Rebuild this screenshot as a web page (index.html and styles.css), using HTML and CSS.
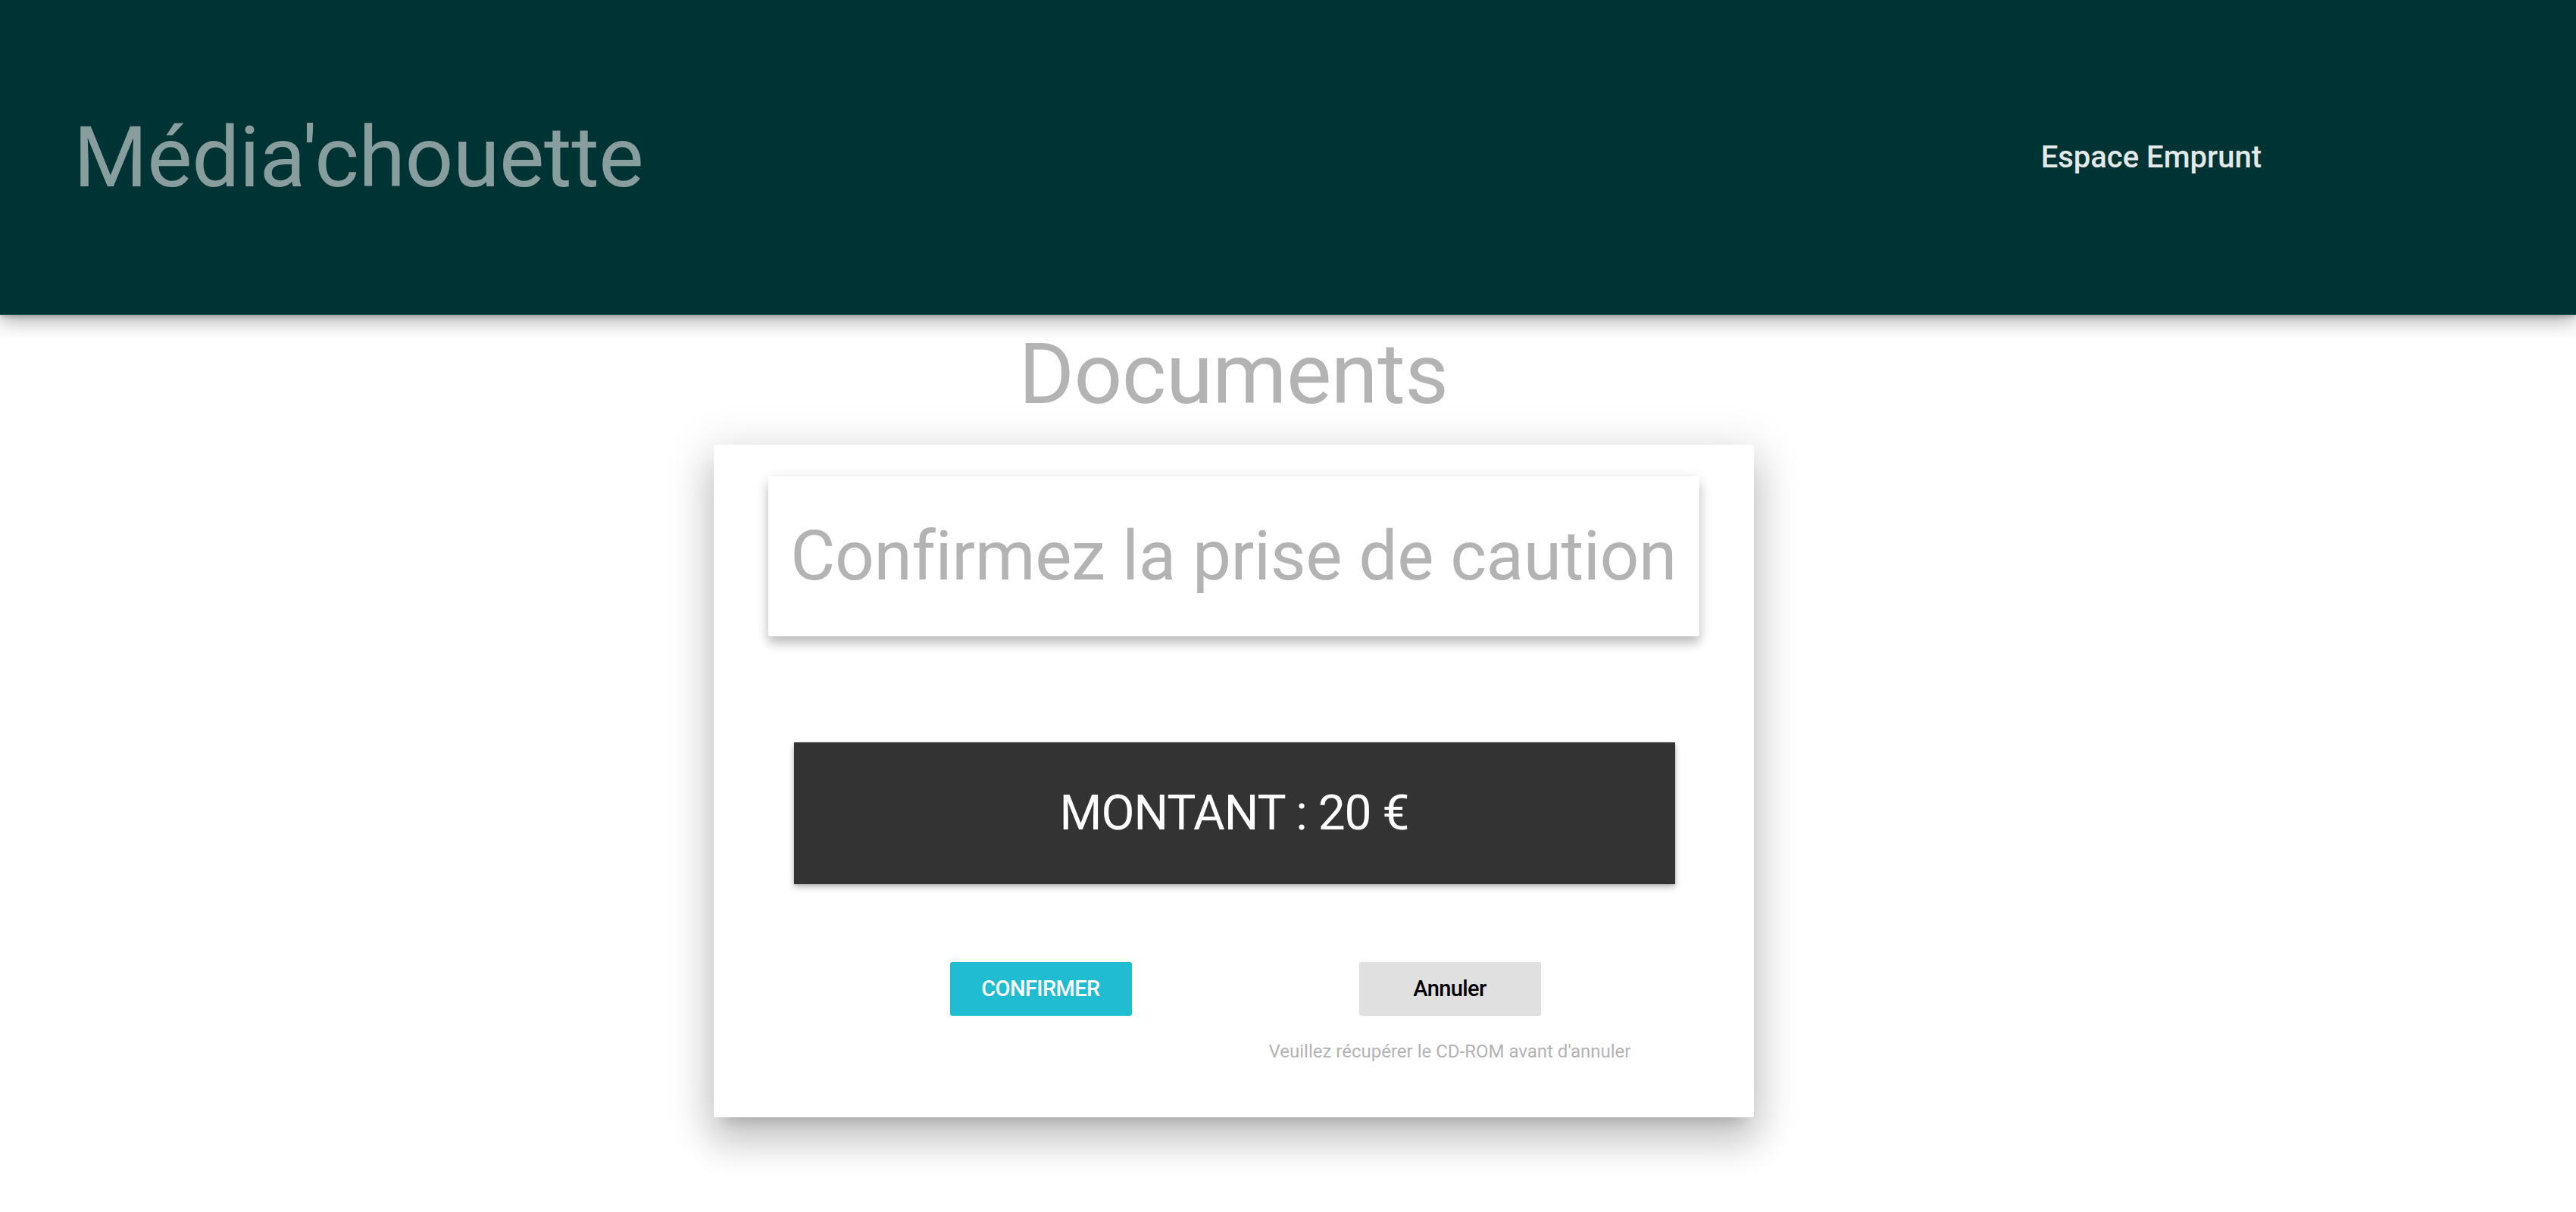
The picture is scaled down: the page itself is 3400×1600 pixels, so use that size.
FILE: index.html
```html
<!DOCTYPE html>
<html lang="fr">
<head>
<meta charset="utf-8">
<title>Média'chouette</title>
<link rel="stylesheet" href="styles.css">
</head>
<body>
<header class="topbar">
  <div class="brand">Média'chouette</div>
  <nav class="nav"><a class="nav-link" href="#">Espace Emprunt</a></nav>
</header>
<main class="main">
  <h1 class="page-title">Documents</h1>
  <section class="card">
    <div class="title-card"><h2 class="title-text">Confirmez la prise de caution</h2></div>
    <div class="amount-box">MONTANT : 20 €</div>
    <div class="actions">
      <div class="action-col">
        <button class="btn btn-confirm">CONFIRMER</button>
      </div>
      <div class="action-col">
        <button class="btn btn-cancel">Annuler</button>
        <p class="hint">Veuillez récupérer le CD-ROM avant d'annuler</p>
      </div>
    </div>
  </section>
</main>
</body>
</html>
```

FILE: styles.css
```css
* { box-sizing: border-box; }
html, body { margin: 0; padding: 0; background: #ffffff; }
body { font-family: Roboto, "Noto Sans", "Liberation Sans", sans-serif; }

.topbar {
  height: 416px;
  background: #003333;
  border-bottom: 1px solid #2b5a5a;
  display: flex;
  align-items: center;
  box-shadow: 0 8px 24px rgba(0,0,0,0.32), 0 2px 6px rgba(0,0,0,0.2);
  position: relative;
  z-index: 2;
}
.brand {
  margin-left: 97px;
  font-size: 112px;
  line-height: 1;
  font-weight: 400;
  letter-spacing: -0.5px;
  color: #889e9e;
}
.nav { margin-left: auto; margin-right: 415px; }
.nav-link {
  display: block;
  font-size: 40px;
  line-height: 1;
  font-weight: 500;
  color: #e3e9e9;
  text-decoration: none;
}

.main {
  padding: 0 144px 120px 0;
  display: flex;
  flex-direction: column;
  align-items: center;
}
.page-title {
  margin: 22px 0 37px;
  font-size: 112px;
  line-height: 1;
  font-weight: 400;
  letter-spacing: -0.5px;
  color: #b3b3b3;
}

.card {
  width: 1373px;
  background: #fff;
  border-radius: 3px;
  padding: 42px 72px 75px;
  box-shadow: 0 32px 48px 4px rgba(0,0,0,0.14), 0 12px 60px 10px rgba(0,0,0,0.12), 0 16px 20px -14px rgba(0,0,0,0.2);
}
.title-card {
  height: 211px;
  background: #fff;
  border-radius: 3px;
  display: flex;
  align-items: center;
  justify-content: center;
  box-shadow: 0 10px 14px rgba(0,0,0,0.2), 0 3px 20px rgba(0,0,0,0.1);
}
.title-text {
  margin: 0;
  font-size: 91px;
  line-height: 1;
  font-weight: 400;
  letter-spacing: -0.4px;
  color: #b3b3b3;
  white-space: nowrap;
}
.amount-box {
  margin: 140px 32px 0 34px;
  height: 187px;
  background: #333333;
  display: flex;
  align-items: center;
  justify-content: center;
  font-size: 64px;
  line-height: 1;
  letter-spacing: -1px;
  color: #ffffff;
  box-shadow: 0 4px 8px rgba(0,0,0,0.28), 0 1px 3px rgba(0,0,0,0.12);
}
.actions {
  margin: 103px 0 0 90px;
  display: grid;
  grid-template-columns: 540px 540px;
}
.action-col {
  display: flex;
  flex-direction: column;
  align-items: center;
}
.btn {
  width: 240px;
  height: 71px;
  border: none;
  border-radius: 3px;
  font-family: Roboto, "Noto Sans", "Liberation Sans", sans-serif;
  font-size: 29px;
  line-height: 1;
  font-weight: 500;
  letter-spacing: -0.6px;
  padding: 0;
  cursor: pointer;
}
.btn-confirm { background: #1fbcd2; color: #ffffff; }
.btn-cancel { background: #e0e0e0; color: #000000; }
.hint {
  margin: 35px 0 0;
  font-size: 24px;
  line-height: 1;
  color: #b3b3b3;
  white-space: nowrap;
}
```
